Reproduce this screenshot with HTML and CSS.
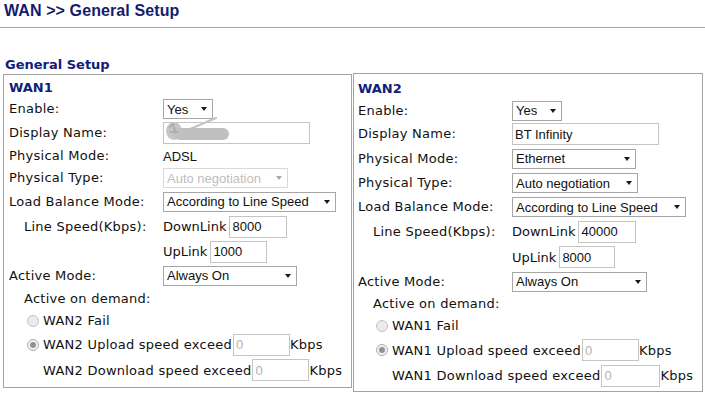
FILE: index.html
```
<!DOCTYPE html>
<html lang="en">
<head>
  <meta charset="UTF-8" />
  <title>WAN &gt;&gt; General Setup</title>
  <link rel="stylesheet" href="styles.css">
</head>
<body>

<div class="page-title">WAN &gt;&gt; General Setup</div>
<div class="section-title">General Setup</div>

<div class="panels">
  <div class="panel wan1">
    <div class="panel-title">WAN1</div>

    <div class="lbl">Enable:</div>
    <div class="ctl"><span class="sel w-yes"><select><option>Yes</option><option>No</option></select></span></div>

    <div class="lbl">Display Name:</div>
    <div class="ctl">
      <span class="name-wrap">
        <input type="text" class="txt w-name" value="">
        <svg class="smudge" width="70" height="26" viewBox="0 0 70 26">
          <path d="M26 13 L52 2" stroke="#c4c4c4" stroke-width="2.2" stroke-linecap="round" fill="none"/>
          <ellipse cx="10" cy="15" rx="8" ry="9" fill="#c6c6c6"/>
          <rect x="10" y="12" width="55" height="12" rx="6" fill="#c0c0c0"/>
          <path d="M5 12 L9 8 L11 15 M6 16 L14 16" stroke="#a8a8a8" stroke-width="1.6" fill="none"/>
        </svg>
      </span>
    </div>

    <div class="lbl">Physical Mode:</div>
    <div class="ctl plain">ADSL</div>

    <div class="lbl">Physical Type:</div>
    <div class="ctl"><span class="sel off w-type1"><select disabled><option>Auto negotiation</option></select></span></div>

    <div class="lbl">Load Balance Mode:</div>
    <div class="ctl"><span class="sel w-lb1"><select><option>According to Line Speed</option></select></span></div>

    <div class="lbl sub">Line Speed(Kbps):</div>
    <div class="ctl"><span class="pre link">DownLink</span><input type="text" class="txt w-down1" value="8000"></div>

    <div class="lbl"></div>
    <div class="ctl"><span class="pre link">UpLink</span><input type="text" class="txt w-up1" value="1000"></div>

    <div class="lbl">Active Mode:</div>
    <div class="ctl"><span class="sel w-am1"><select><option>Always On</option></select></span></div>

    <div class="full sub">Active on demand:</div>
    <div class="full opt"><span class="radio"></span>WAN2 Fail</div>
    <div class="full opt"><span class="radio on"></span><span class="pre">WAN2 Upload speed exceed</span><input type="text" class="txt off w-ex1" value="0" disabled>Kbps</div>
    <div class="full opt deep"><span class="pre">WAN2 Download speed exceed</span><input type="text" class="txt off w-ex1" value="0" disabled>Kbps</div>
  </div>

  <div class="panel wan2">
    <div class="panel-title">WAN2</div>

    <div class="lbl">Enable:</div>
    <div class="ctl"><span class="sel w-yes"><select><option>Yes</option><option>No</option></select></span></div>

    <div class="lbl">Display Name:</div>
    <div class="ctl"><input type="text" class="txt w-name" value="BT Infinity"></div>

    <div class="lbl">Physical Mode:</div>
    <div class="ctl"><span class="sel w-mode2"><select><option>Ethernet</option><option>ADSL</option></select></span></div>

    <div class="lbl">Physical Type:</div>
    <div class="ctl"><span class="sel w-type2"><select><option>Auto negotiation</option></select></span></div>

    <div class="lbl">Load Balance Mode:</div>
    <div class="ctl"><span class="sel w-lb2"><select><option>According to Line Speed</option></select></span></div>

    <div class="lbl sub">Line Speed(Kbps):</div>
    <div class="ctl"><span class="pre link">DownLink</span><input type="text" class="txt w-down1" value="40000"></div>

    <div class="lbl"></div>
    <div class="ctl"><span class="pre link">UpLink</span><input type="text" class="txt w-up2" value="8000"></div>

    <div class="lbl">Active Mode:</div>
    <div class="ctl"><span class="sel w-am2"><select><option>Always On</option></select></span></div>

    <div class="full sub">Active on demand:</div>
    <div class="full opt"><span class="radio"></span>WAN1 Fail</div>
    <div class="full opt"><span class="radio on"></span><span class="pre">WAN1 Upload speed exceed</span><input type="text" class="txt off w-ex1" value="0" disabled>Kbps</div>
    <div class="full opt deep"><span class="pre">WAN1 Download speed exceed</span><input type="text" class="txt off w-ex2" value="0" disabled>Kbps</div>
  </div>
</div>

</body>
</html>
```
FILE: styles.css
```
body {
  margin: 0;
  background: #fff;
  font-family: "DejaVu Sans", Verdana, sans-serif;
  font-size: 13px;
  letter-spacing: 0.25px;
  color: #111;
}
.page-title {
  font: bold 16px/18px "Liberation Sans", Arial, sans-serif;
  letter-spacing: 0.1px;
  color: #141d6c;
  padding: 2px 4px 7px;
  border-bottom: 1px solid #a5a5a5;
}
.section-title {
  font-weight: bold;
  line-height: 16px;
  color: #10207a;
  margin: 29px 5px 0;
  letter-spacing: 0;
}
.panels {
  display: flex;
  align-items: flex-start;
  gap: 1px;
  padding-left: 3px;
}
.panel {
  border: 1px solid #a3a3a3;
  display: grid;
  grid-template-columns: 154px 1fr;
  align-items: center;
  box-sizing: border-box;
}
.wan1 {
  width: 349px;
  margin-top: 1px;
  padding: 0 0 4px 5px;
  grid-template-rows: 23px 22px 25px 22px 22px 25px 25px 25px 23px 22px 23px 25px 26px;
}
.wan2 {
  width: 350px;
  padding: 0 0 3px 4px;
  grid-template-rows: 25px 23px 24px 25px 24px 24px 25px 26px 23px 21px 23px 26px 25px;
}
.panel-title {
  grid-column: 1 / -1;
  font-weight: bold;
  color: #10207a;
  line-height: 16px;
  padding-top: 3px;
  letter-spacing: 0;
}
.wan2 .panel-title { padding-top: 5px; }
.lbl { line-height: 16px; }
.sub { padding-left: 15px; }
.full { grid-column: 1 / -1; }
.ctl, .opt {
  display: flex;
  align-items: center;
}
.plain {
  font: 13px "Liberation Sans", Arial, sans-serif;
  letter-spacing: normal;
}
.pre { margin-right: 1px; }
.pre.link { letter-spacing: 0; margin-right: 3px; }
.opt { padding-left: 18px; }
.opt.deep { padding-left: 34px; }

/* selects */
.sel {
  position: relative;
  display: inline-block;
  height: 20px;
}
.sel select {
  -webkit-appearance: none;
  appearance: none;
  width: 100%;
  height: 20px;
  box-sizing: border-box;
  border: 1px solid #a6a6a6;
  border-radius: 0;
  background: #fff;
  padding: 0 3px;
  margin: 0;
  font: 13px "Liberation Sans", Arial, sans-serif;
  letter-spacing: normal;
  color: #111;
}
.sel::after {
  content: "";
  position: absolute;
  right: 6px;
  top: 8px;
  border-left: 3.5px solid transparent;
  border-right: 3.5px solid transparent;
  border-top: 4px solid #1a1a1a;
  pointer-events: none;
}
.sel.off select {
  color: #a3a3a3;
  border-color: #c9c9c9;
}
.sel.off::after { border-top-color: #a8a8a8; }
.w-yes { width: 50px; }
.w-type1 { width: 125px; }
.w-lb1 { width: 173px; }
.w-am1 { width: 134px; }
.w-mode2 { width: 124px; }
.w-type2 { width: 126px; }
.w-lb2 { width: 174px; }
.w-am2 { width: 135px; }

/* text boxes */
.txt {
  height: 22px;
  box-sizing: border-box;
  border: 1px solid #c4c4c4;
  border-radius: 0;
  padding: 0 2px;
  margin: 0;
  font: 13px "Liberation Sans", Arial, sans-serif;
  letter-spacing: normal;
  color: #111;
  background: #fff;
}
.txt.off {
  color: #b3b3b3;
  background: #fff;
}
.w-name { width: 147px; }
.w-down1 { width: 58px; }
.w-up1 { width: 57px; }
.w-up2 { width: 56px; }
.w-ex1 { width: 57px; }
.w-ex2 { width: 59px; }

.name-wrap {
  position: relative;
  display: inline-block;
  height: 22px;
}
.smudge {
  position: absolute;
  left: 1px;
  top: -6px;
}

/* radios */
.radio {
  position: relative;
  flex: none;
  width: 12px;
  height: 12px;
  box-sizing: border-box;
  border-radius: 50%;
  border: 1px solid #c2c2c2;
  background: #ebebeb;
  margin-right: 4px;
}
.radio.on { background: #f4f4f4; border-color: #adadad; }
.radio.on::after {
  content: "";
  position: absolute;
  left: 2px;
  top: 2px;
  width: 6px;
  height: 6px;
  border-radius: 50%;
  background: #939393;
}
```
